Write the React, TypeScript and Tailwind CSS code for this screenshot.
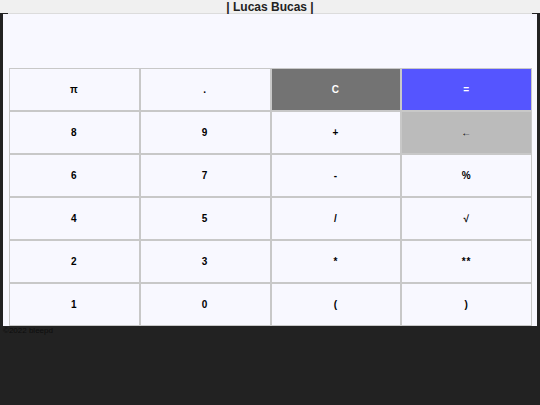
import React from "react";

type Key = { label: string; tone?: "clear" | "equal" | "back" };

const keys: Key[] = [
   { label: "π" }, { label: "." }, { label: "C", tone: "clear" }, { label: "=", tone: "equal" },
   { label: "8" }, { label: "9" }, { label: "+" }, { label: "←", tone: "back" },
   { label: "6" }, { label: "7" }, { label: "-" }, { label: "%" },
   { label: "4" }, { label: "5" }, { label: "/" }, { label: "√" },
   { label: "2" }, { label: "3" }, { label: "*" }, { label: "**" },
   { label: "1" }, { label: "0" }, { label: "(" }, { label: ")" },
];

const toneClass = (tone?: Key["tone"]): string => {
   if (tone === "clear") return "bg-[#737373] text-white";
   if (tone === "equal") return "bg-[#5555ff] text-white";
   if (tone === "back") return "bg-[#bbbbbb] text-black";
   return "bg-[#f8f8ff] text-black";
};

export default function App() {
   return (
      <div className="w-full h-[405px] bg-[#222222] font-['Liberation_Sans',sans-serif]">
         {/* title bar */}
         <div className="h-[13px] bg-[#f0f0f0] text-center text-[12px] font-bold leading-[14px] text-[#222]">
            | Lucas Bucas |
         </div>
         <div className="mx-[8px] h-[1px] bg-[#dcdcdc]" />

         {/* calculator body */}
         <div className="mx-[3px] bg-[#f8f8ff]">
            <div className="h-[54px]" />
            <div className="ml-[6px] mr-[5px] grid grid-cols-4">
               {keys.map((key, i) => (
                  <button
                     key={i}
                     className={`h-[43px] border border-[#c8c8c8] text-[10px] font-bold tracking-[1px] ${toneClass(key.tone)}`}>
                     {key.label}
                  </button>
               ))}
            </div>
         </div>

         <p className="pl-[3px] text-[8px] leading-[10px] text-[#0e0e0e]">©2022 bleepd</p>
      </div>
   );
}
